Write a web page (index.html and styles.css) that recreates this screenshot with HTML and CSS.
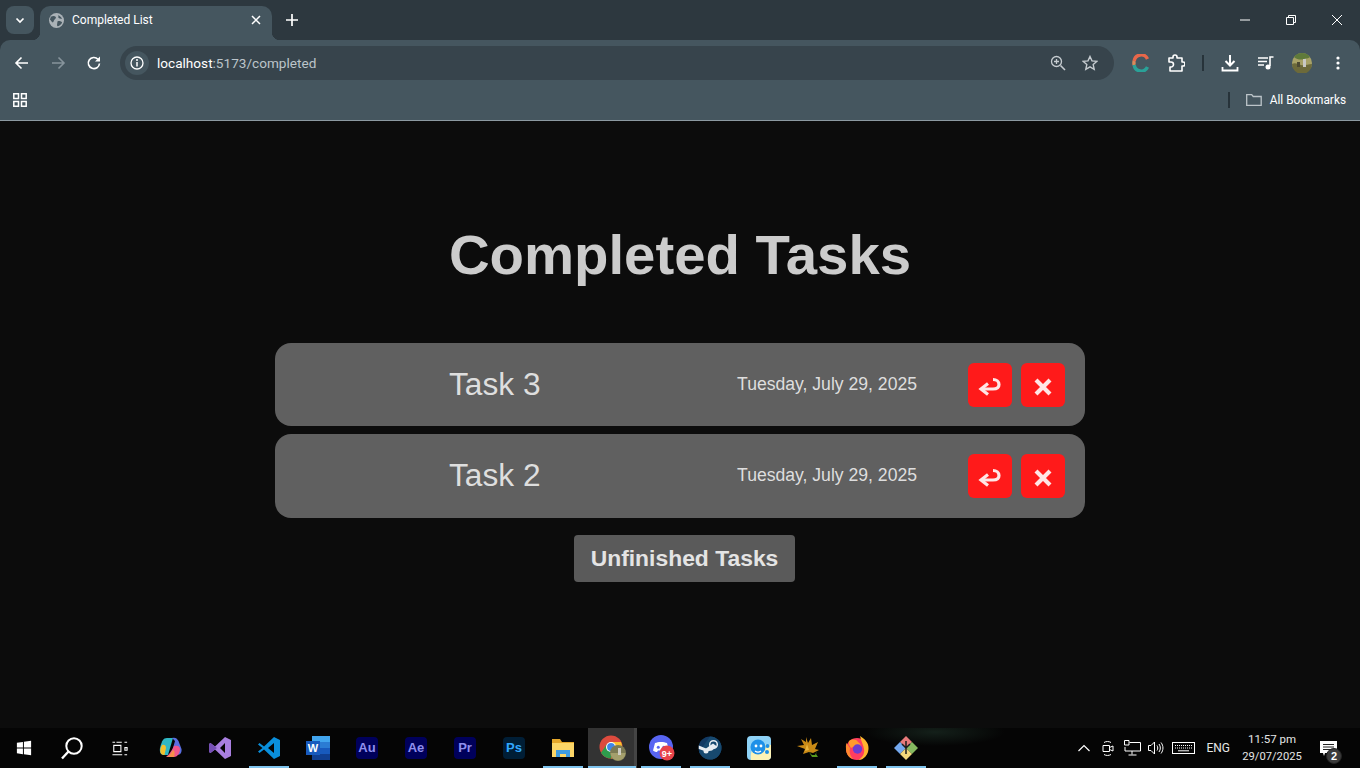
FILE: index.html
```html
<!DOCTYPE html>
<html lang="en">
<head>
    <meta charset="UTF-8">
    <meta name="viewport" content="width=device-width, initial-scale=1.0">
    <title>Completed List</title>
    <link rel="stylesheet" href="styles.css">
</head>
<body>
    <!-- browser chrome -->
    <div class="tabstrip">
        <div class="tabsearch">
            <svg width="12" height="12" viewBox="0 0 12 12"><path d="M2.500 4.500 6 8l3.500-3.500" fill="none" stroke="#fff" stroke-width="1.700"/></svg>
        </div>
        <div class="tab">
            <svg class="favicon" width="15" height="15" viewBox="0 0 16 16">
                <circle cx="8" cy="8" r="8" fill="#aab2b7"/>
                <path d="M2 4c2-1 4-1 5 0s0 2-1 3-1 3-2 3-2-2-3-3zM9 9c2-1 4 0 5 1-1 2-3 4-5 4-1-1 0-3 0-5zM10 2c1 1 3 2 4 4-2 0-3 0-4-1z" fill="#45565f"/>
            </svg>
            <span class="tabtitle">Completed List</span>
            <svg width="12" height="12" viewBox="0 0 12 12"><path d="M2 2l8 8M10 2l-8 8" stroke="#fff" stroke-width="1.500"/></svg>
        </div>
        <svg class="newtab" width="14" height="14" viewBox="0 0 14 14"><path d="M7 1v12M1 7h12" stroke="#fff" stroke-width="1.700"/></svg>
        <div class="wincontrols">
            <svg width="12" height="12" viewBox="0 0 12 12"><path d="M1 6h10" stroke="#fff"/></svg>
            <svg width="12" height="12" viewBox="0 0 12 12"><path d="M1.500 3.500h7v7h-7zM3.500 3.500v-2h7v7h-2" fill="none" stroke="#fff"/></svg>
            <svg width="12" height="12" viewBox="0 0 12 12"><path d="M1 1l10 10M11 1L1 11" stroke="#fff"/></svg>
        </div>
    </div>

    <div class="toolbar">
        <svg class="navicon" width="16" height="16" viewBox="0 0 16 16"><path d="M14 8H2.500M7.500 2.500 2 8l5.500 5.500" fill="none" stroke="#fff" stroke-width="1.600"/></svg>
        <svg class="navicon" width="16" height="16" viewBox="0 0 16 16"><path d="M2 8h11.500M8.500 2.500 14 8l-5.500 5.500" fill="none" stroke="#87949c" stroke-width="1.600"/></svg>
        <svg class="navicon" width="16" height="16" viewBox="0 0 16 16"><path d="M13.500 8.500a5.600 5.600 0 1 1-1.500-4.300" fill="none" stroke="#fff" stroke-width="1.600"/><path d="M14 1.500v5h-5z" fill="#fff"/></svg>
        <div class="omnibox">
            <div class="siteinfo">
                <svg width="14" height="14" viewBox="0 0 14 14"><circle cx="7" cy="7" r="6" fill="none" stroke="#fff" stroke-width="1.300"/><path d="M7 6v4.500" stroke="#fff" stroke-width="1.500"/><circle cx="7" cy="4" r="1" fill="#fff"/></svg>
            </div>
            <span class="url"><span class="host">localhost</span>:5173/completed</span>
            <svg class="zoomicon" width="16" height="16" viewBox="0 0 16 16"><circle cx="6.500" cy="6.500" r="5" fill="none" stroke="#c6ccd0" stroke-width="1.300"/><path d="M10.500 10.500 15 15" stroke="#c6ccd0" stroke-width="1.600"/><path d="M6.500 4v5M4 6.500h5" stroke="#c6ccd0" stroke-width="1.300"/></svg>
            <svg class="staricon" width="16" height="16" viewBox="0 0 16 16"><path d="M8 1.500l2 4.400 4.800.5-3.600 3.200 1 4.700L8 11.900l-4.200 2.400 1-4.700L1.200 6.400 6 5.900z" fill="none" stroke="#c6ccd0" stroke-width="1.400"/></svg>
        </div>
        <svg class="exticon colorC" width="18" height="18" viewBox="0 0 18 18">
            <path d="M15.500 5A7 7 0 0 0 2.200 7" fill="none" stroke="#e8674a" stroke-width="3.400"/>
            <path d="M2.200 7a7 7 0 0 0 0 4" fill="none" stroke="#d98a5a" stroke-width="3.400"/>
            <path d="M2.200 11A7 7 0 0 0 15.500 13" fill="none" stroke="#2aa198" stroke-width="3.400"/>
        </svg>
        <svg class="exticon puzzle" width="18" height="18" viewBox="0 0 18 18"><path d="M2 4h4V3a2 2 0 0 1 4 0v1h5v4h1a2 2 0 0 1 0 4h-1v5H3v-4h1a2.500 2.500 0 0 0 0-5H2z" fill="none" stroke="#fff" stroke-width="1.600" stroke-linejoin="round"/></svg>
        <div class="tooldivider"></div>
        <svg class="exticon download" width="18" height="18" viewBox="0 0 18 18"><path d="M9 1v10M4.500 7 9 11.500 13.500 7" fill="none" stroke="#fff" stroke-width="2"/><path d="M1.500 13v3.500h15V13" fill="none" stroke="#fff" stroke-width="1.800"/></svg>
        <svg class="exticon media" width="16" height="16" viewBox="0 0 16 16"><path d="M0 3h10M0 6.500h9M0 10h6" stroke="#fff" stroke-width="1.400"/><path d="M12 11V2h3.500" fill="none" stroke="#fff" stroke-width="1.600"/><circle cx="10" cy="12" r="2.500" fill="#fff"/></svg>
        <svg class="avatar" width="20" height="20" viewBox="0 0 20 20">
            <circle cx="10" cy="10" r="10" fill="#a8a267"/>
            <path d="M2 4a10 10 0 0 1 16 0c-2 2-4 1-6 2S5 7 2 4" fill="#5f7a3a"/>
            <path d="M0 11c3-2 6 0 9 1s7-1 11-1a10 10 0 0 1-20 0" fill="#6d6a3a"/>
            <path d="M11 6h3v8h-3z" fill="#c9c8c4"/>
            <path d="M5 9h3v5H5z" fill="#4d4a32"/>
        </svg>
        <svg class="menuicon" width="4" height="14" viewBox="0 0 4 14"><circle cx="2" cy="2" r="1.600" fill="#fff"/><circle cx="2" cy="7" r="1.600" fill="#fff"/><circle cx="2" cy="12" r="1.600" fill="#fff"/></svg>
    </div>

    <div class="bookmarks">
        <svg class="apps" width="14" height="14" viewBox="0 0 14 14"><path d="M.8.800h4.700v4.700H.8zM8.500.800h4.700v4.700H8.500zM.8 8.500h4.700v4.700H.8zM8.500 8.500h4.700v4.700H8.500z" fill="none" stroke="#fff" stroke-width="1.500"/></svg>
        <div class="bookdivider"></div>
        <svg width="16" height="14" viewBox="0 0 16 14"><path d="M.7 12.300V1.700h5l1.500 1.800h8v8.800z" fill="none" stroke="#bcc4c9" stroke-width="1.300"/></svg>
        <span class="booklabel">All Bookmarks</span>
    </div>

    <!-- page -->
    <main class="page">
        <h1>Completed Tasks</h1>
        <div class="taskList">
            <div class="taskRow">
                <span class="taskName">Task 3</span>
                <span class="taskDate">Tuesday, July 29, 2025</span>
                <button class="iconBtn">
                    <svg width="24" height="20" viewBox="0 0 24 20"><path d="M10 6.500 3 12l7 5.500" fill="none" stroke="#ffe6e6" stroke-width="3.200"/><path d="M4 12h11c4 0 6-1.500 6-4.500S18.500 2.500 15 2.500" fill="none" stroke="#ffe6e6" stroke-width="3.200"/></svg>
                </button>
                <button class="iconBtn">
                    <svg width="20" height="20" viewBox="0 0 20 20"><path d="M3 3l14 14M17 3 3 17" stroke="#ffe6e6" stroke-width="4.200"/></svg>
                </button>
            </div>
            <div class="taskRow tall">
                <span class="taskName">Task 2</span>
                <span class="taskDate">Tuesday, July 29, 2025</span>
                <button class="iconBtn">
                    <svg width="24" height="20" viewBox="0 0 24 20"><path d="M10 6.500 3 12l7 5.500" fill="none" stroke="#ffe6e6" stroke-width="3.200"/><path d="M4 12h11c4 0 6-1.500 6-4.500S18.500 2.500 15 2.500" fill="none" stroke="#ffe6e6" stroke-width="3.200"/></svg>
                </button>
                <button class="iconBtn">
                    <svg width="20" height="20" viewBox="0 0 20 20"><path d="M3 3l14 14M17 3 3 17" stroke="#ffe6e6" stroke-width="4.200"/></svg>
                </button>
            </div>
        </div>
        <button class="switchBtn">Unfinished Tasks</button>
    </main>

    <!-- taskbar -->
    <div class="taskbar">
        <div class="slot">
            <svg width="16" height="16" viewBox="0 0 18 18"><path d="M1 3.200 7.800 2.200v6.300H1zM8.900 2 17 .9v7.600H8.900zM1 9.600h6.800v6.300L1 15zM8.900 9.600H17v7.600l-8.100-1.100z" fill="#fff"/></svg>
        </div>
        <div class="slot searchSlot">
            <svg width="24" height="24" viewBox="0 0 24 24"><circle cx="14" cy="10" r="7.700" fill="none" stroke="#fff" stroke-width="2"/><path d="M8.500 15.500 2 22.500" stroke="#fff" stroke-width="2.400"/></svg>
        </div>
        <div class="slot viewSlot">
            <svg width="16" height="15" viewBox="0 0 18 16"><path d="M.5 1h3M5 1h6M.5 15h11M2 4.500h8v7H2zM14 1h3M14.500 7h2.500v3h-2.500zM14 15h3" fill="none" stroke="#fff" stroke-width="1.200"/></svg>
        </div>
        <div class="slot">
            <svg width="24" height="24" viewBox="0 0 24 24">
                <path d="M8 2h6l-5 17H5C1 19 0 15 1.500 10 3 5 4 2 8 2z" fill="#2fb7c4"/>
                <path d="M3 9c2-1 4 0 4 3l-1.500 7H5C1 19 0 14 3 9z" fill="#f2c12e"/>
                <path d="M13 2c3-1 5 0 6.500 3l3 8c.5 3-1 6-4.500 6h-6l4-14z" fill="#5a6ee0"/>
                <path d="M15 10c3-1 6 0 6 3s-2 8-6 8H7c3-2 6-7 8-11z" fill="#f0568c"/>
                <path d="M8 21c3-2 4-4 6-7 2 1 2 3 1 7z" fill="#f5904a"/>
            </svg>
        </div>
        <div class="slot">
            <svg width="24" height="24" viewBox="0 0 24 24"><path d="M17 1l6 3v16l-6 3L7 13.500 2.500 17 1 16V8l1.500-1L7 10.500zM17 7l-5 5 5 5z" fill="#a97fe0" fill-rule="evenodd"/><path d="M2.500 7 7 10.500l2 1.500-2 1.500L2.500 17 1 16V8z" fill="#7650b5"/></svg>
        </div>
        <div class="slot running">
            <svg width="24" height="24" viewBox="0 0 24 24"><path d="M17 1l6 3v16l-6 3L7 13.500 2.500 17 1 15.500 5.500 12 1 8.500 2.500 7 7 10.500zM17 7l-6 5 6 5z" fill="#0a8fdc" fill-rule="evenodd"/></svg>
        </div>
        <div class="slot">
            <div class="wordIcon">
                <i></i><i></i><i></i><i></i>
                <span>W</span>
            </div>
        </div>
        <div class="slot"><span class="adobe au">Au</span></div>
        <div class="slot"><span class="adobe ae">Ae</span></div>
        <div class="slot"><span class="adobe pr">Pr</span></div>
        <div class="slot"><span class="adobe ps">Ps</span></div>
        <div class="slot running">
            <svg width="22" height="20" viewBox="0 0 22 20"><path d="M0 1h8l2 3h12v15H0z" fill="#e5a72a"/><path d="M0 5h22v14H0z" fill="#fcd667"/><path d="M4 19v-7h14v7h-4v-3H8v3z" fill="#3f9ce0"/></svg>
        </div>
        <div class="slot active">
            <svg width="28" height="26" viewBox="-1 0 28 26">
                <circle cx="12" cy="12" r="11.500" fill="#dd4b3e"/>
                <path d="M12 23.500a11.500 11.500 0 0 1-10-5.700L8 9l4 7z" fill="#2e9c4d"/>
                <path d="M12 7h10a11.500 11.500 0 0 1-10 16.500l5-8z" fill="#fbc02d"/>
                <circle cx="12" cy="12" r="5" fill="#fff"/>
                <circle cx="12" cy="12" r="3.900" fill="#3f86ea"/>
                <circle cx="19" cy="18" r="8" fill="#7c7a54"/>
                <path d="M11.500 18h15a7.500 7.500 0 0 1-15 0z" fill="#a49f6c"/>
                <path d="M19 13h3v7h-3z" fill="#cfcdc4"/>
            </svg>
        </div>
        <div class="slot running">
            <svg width="28" height="26" viewBox="-2 0 28 26">
                <circle cx="12" cy="12" r="12" fill="#5865f2"/>
                <path d="M6 8c3-1.500 9-1.500 12 0l2 7.500c-1.500 1-3 1.500-4 1.500l-1-1.500H9L8 17c-1 0-2.500-.5-4-1.500z" fill="#fff"/>
                <circle cx="9.300" cy="12.300" r="1.500" fill="#5865f2"/>
                <circle cx="14.700" cy="12.300" r="1.500" fill="#5865f2"/>
                <circle cx="18" cy="18" r="7.500" fill="#e8434a"/>
                <text class="badgeText" x="18" y="21.500" text-anchor="middle">9+</text>
            </svg>
        </div>
        <div class="slot running">
            <svg width="24" height="24" viewBox="0 0 24 24">
                <circle cx="12" cy="12" r="11.500" fill="#123a63"/>
                <path d="M12 .5A11.500 11.500 0 0 1 12 23.500C7 23.500 3 20 1 16z" fill="#17496f"/>
                <path d="M.8 9.500 8 12.500l7-5 4 3-5 4-6 1L.8 13z" fill="#e9eef2"/>
                <circle cx="15.500" cy="8.500" r="3.800" fill="none" stroke="#e9eef2" stroke-width="1.500"/>
                <circle cx="8" cy="15" r="2.500" fill="#e9eef2"/>
            </svg>
        </div>
        <div class="slot">
            <svg width="24" height="24" viewBox="0 0 24 24">
                <rect width="24" height="24" rx="4" fill="#8fd3f7"/>
                <path d="M4 24C2 12 10 7 24 9v11a4 4 0 0 1-4 4z" fill="#fdf3b6"/>
                <circle cx="11" cy="11" r="7.500" fill="#1e90e8"/>
                <circle cx="9" cy="10" r="1.400" fill="#fff"/>
                <circle cx="14" cy="10" r="1.400" fill="#fff"/>
                <path d="M8 15c2 1.500 4 1.500 6 0" fill="none" stroke="#fff" stroke-width="1.300"/>
                <circle cx="20.500" cy="10" r="2" fill="#1e90e8"/>
                <circle cx="20" cy="16" r="2" fill="#1e90e8"/>
            </svg>
        </div>
        <div class="slot">
            <svg width="24" height="24" viewBox="0 0 24 24">
                <path d="M10 1l2 6 3-5 1 7 6-3-3 7 4 1-6 3-4-1-6 2 2-5-8-3 7-1-3-6 5 3z" fill="#c98a16"/>
                <path d="M11 8l2 6-4 1z" fill="#e9b43d"/>
                <path d="M13 16l3 5h6l-2-3 1-3-2 4h-3z" fill="#5a9a1e"/>
            </svg>
        </div>
        <div class="slot running">
            <svg width="24" height="24" viewBox="0 0 24 24">
                <circle cx="12" cy="13" r="11" fill="#ff3d5f"/>
                <path d="M15 0c5 3 9 7 8.500 13C23 19 19 24 13 24c4-2 7-6 6-11-.5-4-3-8-4-13z" fill="#ffb52e"/>
                <path d="M1.500 7C.5 10 1 11 1 13c0 5 3 9 7 10-3-3-4-7-3-11z" fill="#ff8a2e"/>
                <path d="M4 5c3-2 7-2 9 1 2 1 3 3 3 5-3-2-7-1-10 1-1-2-3-4-2-7z" fill="#ff9a2e"/>
                <circle cx="12.500" cy="13" r="4.700" fill="#6c3cd0"/>
            </svg>
        </div>
        <div class="slot running">
            <svg width="24" height="24" viewBox="0 0 24 24">
                <path d="M12 0l6 6-6 6-6-6z" fill="#e87a7a"/>
                <path d="M6 6l6 6-6 6-6-6z" fill="#74a8ee"/>
                <path d="M18 6l6 6-6 6-6-6z" fill="#86b860"/>
                <path d="M12 12l6 6-6 6-6-6z" fill="#f2d87c"/>
                <path d="M12 5v13M8 8l4 4 4-4" fill="none" stroke="#1c1c1c" stroke-width="1.500"/>
            </svg>
        </div>

        <div class="tray">
            <svg width="12" height="8" viewBox="0 0 12 8"><path d="M.5 7 6 1.500 11.500 7" fill="none" stroke="#fff" stroke-width="1.200"/></svg>
            <svg class="trayMeet" width="12" height="16" viewBox="0 0 12 16"><path d="M1 5.500h6.500v6H1zM7.500 7.500l3.500-1.500v5l-3.500-1.500M2 2.500c2-1.300 5-1.300 7 0M2 14.500c2 1.300 5 1.300 7 0" fill="none" stroke="#fff"/></svg>
            <svg class="trayNet" width="17" height="16" viewBox="0 0 17 16"><path d="M5.500 2.500H16.500V11H1V7M8 11v3.500M4.500 15h8M.5.500h4.500v4.500H.5z" fill="none" stroke="#fff"/></svg>
            <svg class="traySound" width="16" height="14" viewBox="0 0 16 14"><path d="M.5 4.500h2.500l3.500-3.500v12L3 9.500H.5zM9 4.500c1 1.500 1 3.500 0 5M11 3c1.800 2.500 1.800 5.500 0 8M13 1.500c2.600 3.400 2.600 7.600 0 11" fill="none" stroke="#fff"/></svg>
            <svg class="trayKeys" width="23" height="12" viewBox="0 0 23 12"><rect x=".5" y=".5" width="22" height="11" fill="none" stroke="#fff"/><path d="M3 3.500h17M3 6h17" stroke="#fff" stroke-dasharray="1 1"/><path d="M6 8.800h11" stroke="#fff"/></svg>
            <span class="trayLang">ENG</span>
            <div class="clock">
                <span>11:57 pm</span>
                <span class="clockDate">29/07/2025</span>
            </div>
            <div class="notify">
                <svg width="17" height="15" viewBox="0 0 17 15"><path d="M0 0h17v12H5l-1 3-1-3H0z" fill="#fff"/><path d="M3 3.500h11M3 6h11M3 8.500h11" stroke="#222"/></svg>
                <span class="notifyBadge">2</span>
            </div>
        </div>
    </div>
</body>
</html>
```

FILE: styles.css
```css
* {
    box-sizing: border-box;
}
html, body {
    height: 100%;
}
body {
    margin: 0;
    height: 768px;
    overflow: hidden;
    display: flex;
    flex-direction: column;
    background-color: #2d383f;
    font-family: "Liberation Sans", Arial, sans-serif;
}
svg {
    display: block;
    flex: none;
}

/* tab strip */
.tabstrip {
    height: 40px;
    flex: none;
    display: flex;
    align-items: flex-start;
    background-color: #2d383f;
    padding-left: 6px;
}
.tabsearch {
    width: 28px;
    height: 28px;
    margin-top: 6px;
    border-radius: 8px;
    background-color: #45565f;
    display: flex;
    align-items: center;
    justify-content: center;
}
.tab {
    width: 232px;
    height: 34px;
    margin-top: 6px;
    margin-left: 6px;
    border-radius: 10px 10px 0 0;
    background-color: #45565f;
    display: flex;
    align-items: center;
    padding: 0 10px 6px 9px;
    position: relative;
}
.tab::before,
.tab::after {
    content: "";
    position: absolute;
    bottom: 0;
    width: 8px;
    height: 8px;
}
.tab::before {
    left: -8px;
    background: radial-gradient(circle at 0 0, #2d383f 8px, #45565f 8.500px);
}
.tab::after {
    right: -8px;
    background: radial-gradient(circle at 100% 0, #2d383f 8px, #45565f 8.500px);
}
.favicon {
    margin-right: 8px;
}
.tabtitle {
    flex: 1;
    font-family: "Roboto", sans-serif;
    font-size: 12px;
    color: #fff;
}
.newtab {
    margin: 13px 0 0 13px;
}
.wincontrols {
    margin-left: auto;
    display: flex;
    gap: 34px;
    padding: 14px 17px 0 0;
}

/* toolbar */
.toolbar {
    height: 46px;
    flex: none;
    display: flex;
    align-items: center;
    background-color: #45565f;
    padding-left: 14px;
    border-radius: 10px 10px 0 0;
}
.navicon {
    margin-right: 20px;
}
.toolbar .navicon:nth-child(3) {
    margin-right: 18px;
}
.omnibox {
    width: 994px;
    height: 34px;
    border-radius: 17px;
    background-color: #37444c;
    display: flex;
    align-items: center;
    padding: 0 16px 0 5px;
    margin-right: 18px;
}
.siteinfo {
    width: 24px;
    height: 24px;
    border-radius: 50%;
    background-color: #45565f;
    display: flex;
    align-items: center;
    justify-content: center;
    margin-right: 8px;
}
.url {
    flex: 1;
    font-family: "Roboto", sans-serif;
    font-size: 13.600px;
    color: #bcc5ca;
}
.host {
    color: #fff;
}
.zoomicon {
    margin-right: 16px;
}
.exticon {
    margin-right: 18px;
}
.colorC {
    margin-right: 17px;
}
.puzzle {
    margin-right: 17px;
}
.tooldivider {
    width: 2px;
    height: 16px;
    background-color: #27333a;
    margin-right: 17px;
}
.download {
    margin-right: 19px;
}
.media {
    margin-right: 18px;
}
.avatar {
    margin-right: 24px;
}

/* bookmarks bar */
.bookmarks {
    height: 35px;
    flex: none;
    display: flex;
    align-items: center;
    background-color: #45565f;
    border-bottom: 1px solid #8d9aa2;
    padding: 0 14px 6px 13px;
}
.apps {
    margin-right: auto;
}
.bookdivider {
    width: 2px;
    height: 16px;
    background-color: #27333a;
    margin-right: 16px;
}
.booklabel {
    font-family: "Roboto", sans-serif;
    font-size: 11.850px;
    color: #fff;
    margin-left: 8px;
}

/* page */
.page {
    flex: 1;
    display: flex;
    flex-direction: column;
    align-items: center;
    background-color: #0c0c0c;
}
h1 {
    margin: 102px 0 0;
    font-size: 56.320px;
    line-height: 64px;
    font-weight: bold;
    color: #cccccc;
}
.taskList {
    width: 810px;
    margin-top: 56px;
    display: flex;
    flex-direction: column;
    gap: 8px;
}
.taskRow {
    height: 83px;
    border-radius: 16px;
    background-color: #606060;
    display: flex;
    align-items: flex-start;
    padding: 20px 20px 0 174px;
}
.tall {
    height: 84px;
}
.taskName {
    flex: 1;
    font-size: 31.680px;
    line-height: 42px;
    color: #dedede;
}
.taskDate {
    font-size: 17.600px;
    line-height: 42px;
    color: #dedede;
    margin-right: 51px;
}
.iconBtn {
    width: 44px;
    height: 44px;
    padding: 4px 0 0;
    border: none;
    border-radius: 6px;
    background-color: #ff1a1a;
    display: flex;
    align-items: center;
    justify-content: center;
}
.iconBtn + .iconBtn {
    margin-left: 9px;
}
.switchBtn {
    margin: 17px 0 0 9px;
    width: 221px;
    height: 47px;
    padding: 0;
    border: none;
    border-radius: 4px;
    background-color: #5a5a5a;
    font-family: "Liberation Sans", Arial, sans-serif;
    font-size: 22.880px;
    font-weight: bold;
    color: #e4e4e4;
}

/* taskbar */
.taskbar {
    height: 40px;
    flex: none;
    display: flex;
    background: radial-gradient(ellipse 70px 14px at 935px 4px, #14201a, #050505);
}
.slot {
    width: 49px;
    height: 40px;
    display: flex;
    align-items: center;
    justify-content: center;
    padding-right: 1px;
    position: relative;
}
.searchSlot {
    padding-right: 3px;
}
.viewSlot {
    padding-right: 5px;
}
.slot.running::after,
.slot.active::after {
    content: "";
    position: absolute;
    left: 4px;
    right: 5px;
    bottom: 0;
    height: 2px;
    background-color: #7fc4ee;
}
.slot.active {
    background-color: #333333;
    box-shadow: inset -3px 0 0 #444;
}
.slot.active::after {
    left: 0;
    right: 1px;
}
.wordIcon {
    width: 24px;
    height: 24px;
    display: grid;
    grid-template-rows: repeat(4, 6px);
    padding-left: 6px;
    position: relative;
}
.wordIcon i {
    display: block;
    background-color: #2b7cd3;
}
.wordIcon i:nth-child(1) {
    background-color: #41a5ee;
}
.wordIcon i:nth-child(3) {
    background-color: #185abd;
}
.wordIcon i:nth-child(4) {
    background-color: #103f91;
}
.wordIcon span {
    position: absolute;
    left: 0;
    top: 5px;
    width: 14px;
    height: 14px;
    background-color: #185abd;
    color: #fff;
    font-size: 11px;
    font-weight: bold;
    line-height: 14px;
    text-align: center;
}
.adobe {
    width: 22px;
    height: 22px;
    border-radius: 4px;
    font-size: 13px;
    font-weight: bold;
    line-height: 22px;
    text-align: center;
}
.au, .ae, .pr {
    background-color: #00005b;
    color: #8f8fee;
}
.ps {
    background-color: #001e36;
    color: #31a8ff;
}
.badgeText {
    font-size: 9px;
    font-weight: bold;
    fill: #fff;
}

/* tray */
.tray {
    margin-left: auto;
    display: flex;
    align-items: center;
}
.trayMeet {
    margin-left: 12px;
}
.trayNet {
    margin-left: 10px;
}
.traySound {
    margin-left: 7px;
}
.trayKeys {
    margin-left: 8px;
}
.trayLang {
    margin-left: 11px;
    font-family: "Roboto", sans-serif;
    font-size: 12px;
    color: #e6e6e6;
}
.clock {
    width: 80px;
    margin-left: 2px;
    display: flex;
    flex-direction: column;
    align-items: center;
    gap: 4px;
    font-family: "Roboto", sans-serif;
    font-size: 11.500px;
    line-height: 14px;
    color: #e6e6e6;
}
.clockDate {
    font-size: 11.200px;
}
.notify {
    width: 48px;
    display: flex;
    justify-content: center;
    padding-right: 16px;
    position: relative;
}
.notifyBadge {
    position: absolute;
    left: 14px;
    top: 7px;
    width: 16px;
    height: 16px;
    border-radius: 50%;
    background-color: #3b3b3b;
    border: 1px solid #222;
    color: #fff;
    font-size: 11px;
    font-weight: bold;
    line-height: 14px;
    text-align: center;
}
```
